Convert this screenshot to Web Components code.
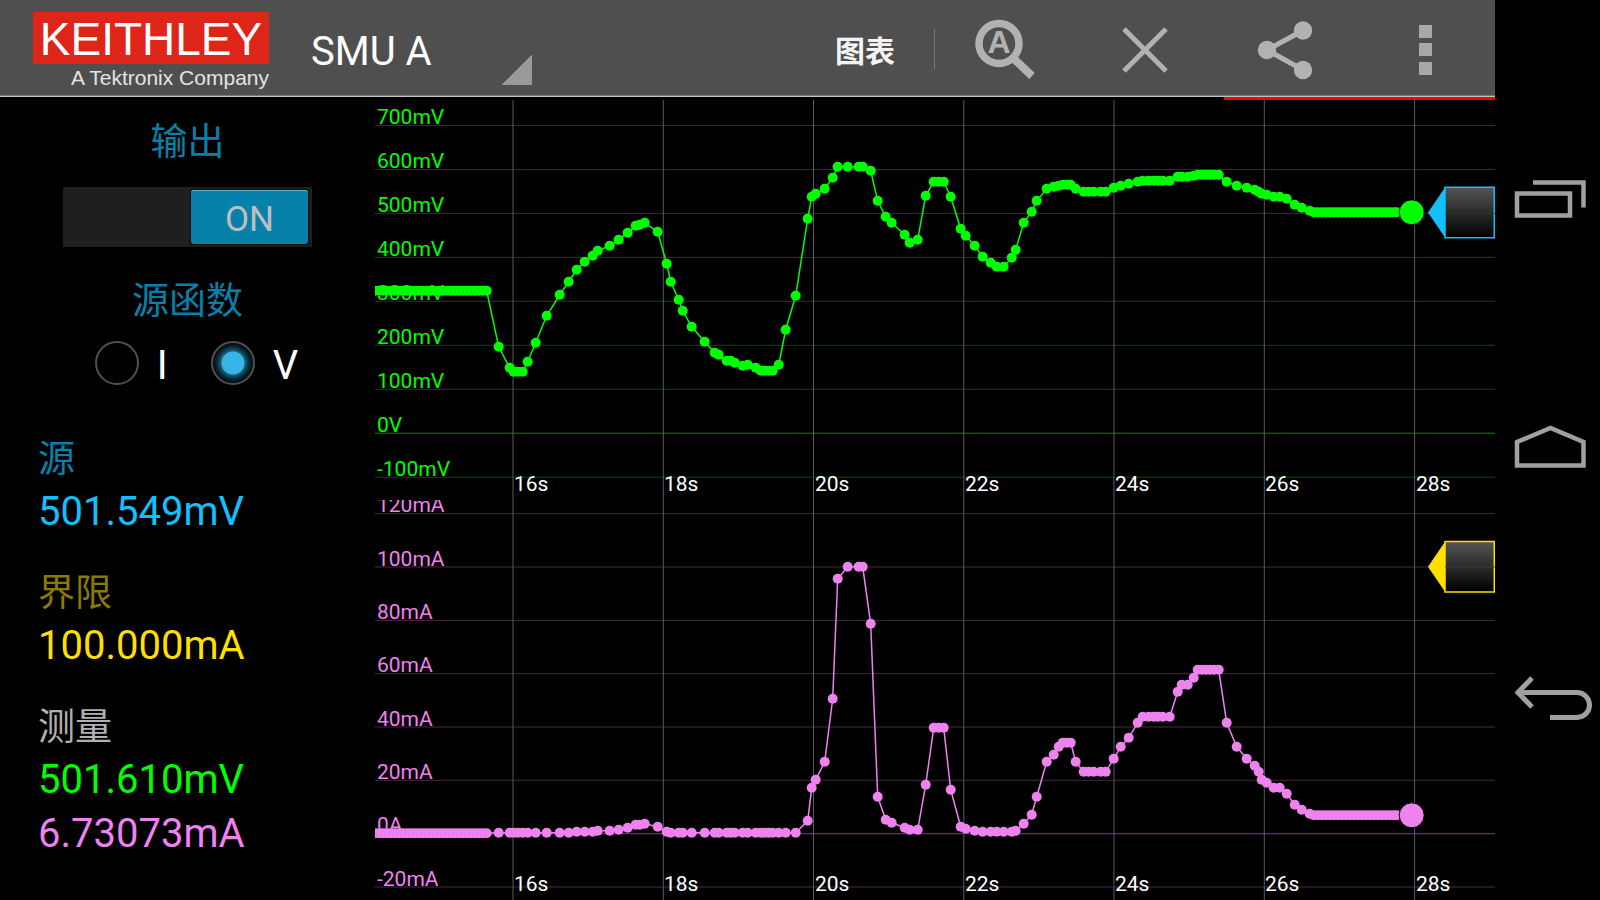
<!DOCTYPE html>
<html lang="zh-CN">
<head>
<meta charset="utf-8">
<title>SMU A</title>
<style>
  html, body { margin: 0; background: #000; }
  body { font-family: Roboto, "Noto Sans CJK SC", sans-serif; color: #fff; }
</style>
</head>
<body>
<smu-shell>
  <smu-app-bar slot="bar">
    <smu-brand>KEITHLEY<span slot="tagline">A Tektronix Company</span></smu-brand>
    <smu-channel label="SMU A"></smu-channel>
    <smu-tab slot="end">图表</smu-tab>
    <smu-action slot="end" label="Auto scale">
      <svg width="140" height="95"><circle cx="64" cy="43.500" r="20" fill="none" stroke="#b2b2b2" stroke-width="7.500"/><path d="M77 57L97 76" stroke="#b2b2b2" stroke-width="8"/><text x="64" y="53" text-anchor="middle" fill="#b2b2b2" font-size="32" font-weight="700" font-family="Liberation Sans, sans-serif">A</text></svg>
    </smu-action>
    <smu-action slot="end" label="Clear">
      <svg width="140" height="95"><path d="M49 29L91 71M91 29L49 71" stroke="#b2b2b2" stroke-width="5"/></svg>
    </smu-action>
    <smu-action slot="end" label="Share">
      <svg width="140" height="95"><path d="M88 30.500L52 50L88 70" fill="none" stroke="#b2b2b2" stroke-width="5"/><g fill="#b2b2b2"><circle cx="88" cy="30.500" r="9.200"/><circle cx="52" cy="50" r="9.200"/><circle cx="88" cy="70" r="9.200"/></g></svg>
    </smu-action>
    <smu-action slot="end" label="More options">
      <svg width="140" height="95"><path d="M64 25h13v13h-13zM64 43h13v13h-13zM64 62h13v13h-13z" fill="#a8a8a8"/></svg>
    </smu-action>
  </smu-app-bar>

  <smu-heading slot="panel">输出</smu-heading>
  <smu-switch slot="panel">ON</smu-switch>
  <smu-heading slot="panel">源函数</smu-heading>
  <smu-function slot="panel"></smu-function>
  <smu-reading slot="readings" style="--label:#0780aa">源<smu-value slot="values" style="color:#12c0ff">501.549mV</smu-value></smu-reading>
  <smu-reading slot="readings" style="--label:#8c7a00">界限<smu-value slot="values" style="color:#ffdf00">100.000mA</smu-value></smu-reading>
  <smu-reading slot="readings" style="--label:#b0b0b0">测量<smu-value slot="values" style="color:#00ff00">501.610mV</smu-value><smu-value slot="values" style="color:#ee82ee">6.73073mA</smu-value></smu-reading>

  <smu-chart slot="charts" trace="voltage"></smu-chart>
  <smu-chart slot="charts" trace="current"></smu-chart>

  <smu-nav slot="nav"></smu-nav>
</smu-shell>

<script>
const define = (name, html, setup) => {
  const template = document.createElement('template');
  template.innerHTML = html;
  customElements.define(name, class extends HTMLElement {
    constructor() {
      super();
      this.attachShadow({ mode: 'open' }).append(template.content.cloneNode(true));
    }
    connectedCallback() { if (setup) setup(this, this.shadowRoot); }
  });
};

define('smu-shell', `
  <style>
    :host { display: grid; grid-template-columns: minmax(0, 1fr) 105px; min-height: 100vh; }
    main { display: grid; grid-template-rows: auto auto minmax(0, 1fr); }
    .strip { display: flex; justify-content: flex-end; height: 3px; }
    .strip i { width: 271px; background: #f00; }
    .work { display: grid; grid-template-columns: 375px minmax(0, 1fr); }
    aside { padding: 19px 0 24px; box-sizing: border-box; }
    .controls { display: flex; flex-direction: column; align-items: center; }
    .readings { display: flex; flex-direction: column; gap: 31px; margin-top: 51px; padding-left: 38px; }
    .charts { display: grid; grid-template-rows: 1fr 1fr; }
  </style>
  <main>
    <slot name="bar"></slot>
    <div class="strip"><i></i></div>
    <div class="work">
      <aside>
        <div class="controls"><slot name="panel"></slot></div>
        <div class="readings"><slot name="readings"></slot></div>
      </aside>
      <div class="charts"><slot name="charts"></slot></div>
    </div>
  </main>
  <slot name="nav"></slot>`);

define('smu-app-bar', `
  <style>
    :host { display: block; }
    header { display: flex; align-items: stretch; height: 96px; padding-left: 33px; background: #4f4f4f;
             border-bottom: 1px solid #c4c4c4; box-shadow: inset 0 -1px #777; }
    .end { display: flex; align-items: stretch; margin-left: auto; }
  </style>
  <header><slot></slot><div class="end"><slot name="end"></slot></div></header>`);

define('smu-brand', `
  <style>
    :host { display: block; width: 236px; padding-top: 12px; font-family: "Liberation Sans", sans-serif; }
    .mark { height: 52px; background: #dd2619; color: #fff; font-size: 46px; line-height: 54px; text-align: center; }
    .tag { font-size: 21px; line-height: 28px; text-align: right; white-space: nowrap; color: #e4e4e4; }
  </style>
  <div class="mark"><slot></slot></div>
  <div class="tag"><slot name="tagline"></slot></div>`);

define('smu-channel', `
  <style>
    :host { display: flex; margin-left: 42px; }
    select { appearance: none; width: 233px; margin: 0; padding: 7px 0 0; border: 0; border-radius: 0; outline: 0;
             color: #fff; font: 40px Roboto, sans-serif;
             background: linear-gradient(135deg, transparent 50%, #999 50%) right 12px bottom 11px / 30px 30px no-repeat; }
  </style>
  <select aria-label="Channel"><option></option></select>`,
  (host, root) => { root.querySelector('option').textContent = host.getAttribute('label'); });

define('smu-tab', `
  <style>
    :host { display: flex; align-items: center; padding-top: 1px; }
    button { padding: 0 39px 0 0; border: 0; border-right: 1px solid #777; background: none; color: #f4f4f4;
             font: 700 30px/40px "Noto Sans CJK SC", sans-serif; }
  </style>
  <button type="button"><slot></slot></button>`);

define('smu-action', `
  <style>
    :host { display: flex; }
    button { display: flex; width: 140px; padding: 0; border: 0; background: none; }
    ::slotted(svg) { display: block; }
  </style>
  <button type="button"><slot></slot></button>`,
  (host, root) => root.querySelector('button').setAttribute('aria-label', host.getAttribute('label')));

define('smu-heading', `
  <style>
    :host { display: block; }
    h2 { margin: 0; font: 400 37px/40px "Noto Sans CJK SC", sans-serif; color: #0780aa; }
  </style>
  <h2><slot></slot></h2>`);

define('smu-switch', `
  <style>
    :host { display: block; margin: 28px 0 31px; }
    label { position: relative; display: flex; justify-content: flex-end; box-sizing: border-box;
            width: 249px; height: 60px; padding: 3px 4px; background: #1f1f1f; }
    input { position: absolute; inset: 0; appearance: none; margin: 0; }
    span { width: 117px; border-radius: 3px; background: #0780aa; box-shadow: inset 0 1px #5cb4d2, 0 0 1px 1px #0c0c0c;
           color: #bebebe; font-size: 35px; line-height: 60px; text-align: center; }
  </style>
  <label><input type="checkbox" role="switch" checked><span><slot></slot></span></label>`);

define('smu-function', `
  <style>
    :host { display: block; margin-top: 23px; }
    fieldset { display: flex; align-items: center; gap: 43px; margin: 0; padding: 0 0 0 18px; border: 0; }
    label { display: flex; align-items: center; gap: 18px; font-size: 40px; line-height: 38px; }
    input { appearance: none; box-sizing: border-box; width: 44px; height: 44px; margin: 0;
            border: 2px solid #505050; border-radius: 50%; background: #000; }
    input:checked { background: radial-gradient(circle, #35b5e8 0 11px, #19607c 12px, #0b2a37 16px, #03090c 20px); }
    span { padding-top: 6px; }
  </style>
  <fieldset aria-label="源函数">
    <label><input type="radio" name="fn"><span>I</span></label>
    <label><input type="radio" name="fn" checked><span>V</span></label>
  </fieldset>`);

define('smu-reading', `
  <style>
    :host { display: block; }
    .name { margin-bottom: 9px; font: 37px/40px "Noto Sans CJK SC", sans-serif; color: var(--label); }
  </style>
  <div class="name"><slot></slot></div>
  <slot name="values"></slot>`);

define('smu-value', `
  <style>:host { display: block; font-size: 40px; line-height: 54px; }</style>
  <slot></slot>`);

define('smu-nav', `
  <style>
    :host { display: block; }
    nav { display: flex; flex-direction: column; justify-content: center; height: 100%; }
    button { height: 250px; padding: 0; border: 0; background: none; }
    svg { display: block; fill: none; stroke: #a0a0a0; stroke-width: 5; }
  </style>
  <nav aria-label="System">
    <button type="button" aria-label="Recent apps"><svg width="105" height="250"><path d="M22 118.500h53v22h-53zM38 107.500h50.500v25" stroke-width="4.500"/></svg></button>
    <button type="button" aria-label="Home"><svg width="105" height="250"><path d="M22 140.500V117L55.500 103L88.500 117V140.500z" stroke-width="4.500"/></svg></button>
    <button type="button" aria-label="Back"><svg width="105" height="250"><path d="M22 117.500H82a12.500 12.500 0 0 1 0 25H55M37 103L23 117.500L37 132"/></svg></button>
  </nav>`);

/* Samples: [x, voltage y, current y] on a 1120 by 400 plot grid. */
const SAMPLES = [];
for (let x = 0; x <= 112; x += 4) SAMPLES.push([x, 191, 333.5]);
SAMPLES.push(
  [124,247,333],[135,268,333],[139,272,333],[143,272,333],[148,272,333],[153,262,333],[161,243,333],[172,216,333],
  [185,195,333],[194,182,333],[202,170,332],[210,162,332],[218,156,332],[223,151,331],[235,146,331],[244,140,330],
  [253,133,328],[261,126,325],[265,125,325],[270,123,324],[283,132,327],[292,164,332],[296,182,333],[304,200,333],
  [308,211,333],[317,227,333],[330,242,333],[340,253,333],[344,255,333],[352,261,333],[356,261,333],[360,263,333],
  [368,266,333],[373,265,333],[381,268,333],[386,271,333],[390,271,333],[394,271,333],[398,271,333],[404,265,333],
  [411,230,333],[421,196,333],[433,119,321],[437,97,288],[441,94,280],[450,89,262],[458,78,199],[463,67,79],
  [473,67,67],[484,67,67],[488,67,67],[496,71,124],[503,101,297],[511,117,320],[517,123,323],[530,135,328],
  [535,143,330],[543,140,330],[551,96,285],[559,82,228],[564,82,228],[569,82,228],[576,97,290],[586,129,327],
  [591,136,329],[600,146,331],[608,157,332],[616,163,332],[622,167,332],[629,167,332],[637,158,332],[641,150,331],
  [649,123,324],[657,112,315],[662,101,297],[672,89,262],[679,87,255],[684,86,247],[688,85,243],[692,85,243],
  [696,85,243],[701,89,262],[709,92,272],[714,92,272],[719,92,272],[726,92,272],[731,92,272],[739,88,259],
  [746,86,247],[754,84,238],[763,82,223],[768,81,217],[774,81,217],[779,81,217],[783,81,217],[788,81,217],
  [795,81,217],[803,77,192],[807,77,185],[813,77,185],[819,76,178],[823,75,170],[827,75,170],[831,75,170],
  [835,75,170],[839,75,170],[844,75,170],[852,82,223],[862,86,247],[872,88,259],[880,90,266],[884,92,272],
  [887,94,280],[892,95,283],[899,97,288],[905,97,288],[912,99,294],[920,105,305],[927,108,310],[935,111,314]);
for (let x = 939; x <= 1019; x += 4) SAMPLES.push([x, 112.5, 315.5]);
SAMPLES.push([1022, 112.5, 315.5], [1037, 112.5, 315.5]);

const TRACES = {
  voltage: { column: 1, color: '#00ff00', grid: '#005400', zero: '#009800', top: 25, step: 43.96,
             ticks: ['700mV','600mV','500mV','400mV','300mV','200mV','100mV','0V','-100mV'],
             marker: '#12c0ff', markerY: 112.5 },
  current: { column: 2, color: '#ee82ee', grid: '#502c50', zero: '#85488a', top: 13.2, step: 53.33,
             ticks: ['120mA','100mA','80mA','60mA','40mA','20mA','0A','-20mA'],
             marker: '#ffdf00', markerY: 66.8 }
};

define('smu-chart', `
  <style>
    :host { display: grid; min-height: 240px; contain: size; overflow: hidden; }
    svg { display: block; width: 100%; height: 100%; font: 21px Roboto, sans-serif; }
  </style>
  <svg role="img"></svg>`,
  (host, root) => {
    const svg = root.querySelector('svg');
    const t = TRACES[host.getAttribute('trace')];
    svg.setAttribute('aria-label', host.getAttribute('trace'));
    const draw = () => {
      const { width, height } = host.getBoundingClientRect();
      const px = x => Math.round(x * width / 1120 * 10) / 10;
      const py = y => Math.round(y * height / 400 * 10) / 10;
      let out = '<defs><linearGradient id="face" x2="0" y2="1"><stop stop-color="#555"/><stop offset="1" stop-color="#000"/></linearGradient></defs>';
      const my = py(t.markerY);
      out += `<path d="M${width - 50} ${my - 25.300}h49.300v50.600h-49.300z" fill="url(#face)" stroke="${t.marker}" stroke-width="1.500"/>`;
      t.ticks.forEach((label, i) => {
        const y = py(t.top + i * t.step);
        const stroke = /^0/.test(label) ? t.zero : t.grid;
        out += `<rect y="${y}" width="${width}" height="1" fill="${stroke}" fill-opacity=".9"/>`
             + `<text x="2" y="${Math.round(y) - 1}" fill="${t.color}">${label}</text>`;
      });
      out += `<path d="M${width - 67} ${my}l17 -25v50z" fill="${t.marker}"/>`;
      for (let s = 16; s <= 28; s += 2) {
        const x = px(137.5 + (s - 16) * 75.13);
        out += `<rect x="${x}" width="1" height="${height}" fill="#5a5a5a"/>`
             + `<text x="${Math.floor(x) + 2}" y="${height - 9}" fill="#fff">${s}s</text>`;
      }
      const points = SAMPLES.map(p => [px(p[0] - 0.3), py(p[t.column] - 0.2)]);
      out += `<polyline points="${points.join(' ')}" fill="none" stroke="${t.color}" stroke-width="1.500"/>`;
      const last = points[points.length - 1];
      points.slice(0, -1).forEach(([x, y]) => { out += `<circle cx="${x}" cy="${y}" r="5" fill="${t.color}"/>`; });
      out += `<circle cx="${last[0]}" cy="${last[1]}" r="12.500" fill="${t.color}" stroke="#000"/>`;
      svg.innerHTML = out;
    };
    draw();
    new ResizeObserver(draw).observe(host);
  });
</script>
</body>
</html>
